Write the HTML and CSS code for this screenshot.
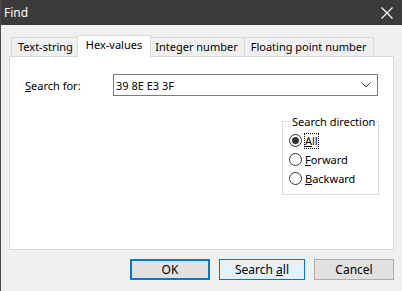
FILE: index.html
```html
<!DOCTYPE html>
<html lang="en">
<head>
    <meta charset="UTF-8">
    <title>Find</title>
    <link rel="stylesheet" href="styles.css">
</head>
<body>
    <div class="window">
        <div class="titlebar">
            <span class="title">Find</span>
            <svg class="close" width="12" height="12" viewBox="0 0 12 12">
                <path d="M0.5 0.5 L11.5 11.5 M11.5 0.5 L0.5 11.5" stroke="#fff" stroke-width="1.2" fill="none"/>
            </svg>
        </div>

        <div class="body">
            <div class="tabs">
                <div class="tab">Text-string</div>
                <div class="tab active">Hex-values</div>
                <div class="tab">Integer number</div>
                <div class="tab">Floating point number</div>
            </div>

            <div class="panel">
                <div class="search-row">
                    <label class="label"><u>S</u>earch for:</label>
                    <div class="combo">
                        <span>39 8E E3 3F</span>
                        <svg width="10" height="6" viewBox="0 0 10 6">
                            <path d="M0.5 0.5 L5 5 L9.5 0.5" stroke="#444" stroke-width="1" fill="none"/>
                        </svg>
                    </div>
                </div>

                <fieldset class="group">
                    <legend>Search direction</legend>
                    <div class="radio">
                        <span class="dot checked"></span>
                        <span class="focus"><u>A</u>ll</span>
                    </div>
                    <div class="radio">
                        <span class="dot"></span>
                        <span><u>F</u>orward</span>
                    </div>
                    <div class="radio">
                        <span class="dot"></span>
                        <span><u>B</u>ackward</span>
                    </div>
                </fieldset>
            </div>

            <div class="buttons">
                <button class="btn default">OK</button>
                <button class="btn hot">Search <u>a</u>ll</button>
                <button class="btn">Cancel</button>
            </div>
        </div>
    </div>
</body>
</html>
```

FILE: styles.css
```css
/* Reset */
* {
    margin: 0;
    padding: 0;
    box-sizing: border-box;
}

body {
    font-family: "Noto Sans", "Open Sans", sans-serif;
    font-size: 11px;
    color: #000;
    background: #f0f0f0;
}

.window {
    width: 402px;
    height: 291px;
    display: flex;
    flex-direction: column;
    border-left: 1px solid #4a4848;
    background: #f0f0f0;
}

/* Title bar */
.titlebar {
    height: 25px;
    background: #3d3a3c;
    display: flex;
    align-items: center;
    justify-content: space-between;
    padding: 0 9px 0 3px;
}

.title {
    color: #fff;
    font-size: 12px;
}

.close {
    display: block;
}

/* Dialog content */
.body {
    flex: 1;
    padding: 12px 8px 0 8px;
    display: flex;
    flex-direction: column;
}

.tabs {
    display: flex;
    padding-left: 2px;
    height: 19px;
    align-items: flex-end;
}

.tab {
    height: 19px;
    line-height: 18px;
    padding: 0 6px;
    border: 1px solid #d9d9d9;
    border-bottom: none;
    background: #f0f0f0;
    margin-left: -1px;
}

.tab:first-child {
    margin-left: 0;
}

.tab.active {
    position: relative;
    z-index: 1;
    height: 22px;
    line-height: 18px;
    margin: 0 -2px -1px -3px;
    padding: 0 8px;
    background: #fff;
}

.panel {
    height: 194px;
    background: #fff;
    border: 1px solid #d9d9d9;
    padding: 17px 14px 0 15px;
    display: flex;
    flex-direction: column;
}

.search-row {
    display: flex;
    align-items: center;
}

.label {
    width: 88px;
}

.combo {
    width: 265px;
    height: 22px;
    border: 1px solid #7a7a7a;
    display: flex;
    align-items: center;
    justify-content: space-between;
    padding: 0 6px 0 2px;
}

.group {
    align-self: flex-end;
    width: 97px;
    min-width: 0;
    margin-top: 18px;
    border: 1px solid #dcdcdc;
    padding: 2px 0 6px 6px;
}

.group legend {
    padding: 0 1px;
    margin-left: 2px;
    white-space: nowrap;
}

.radio {
    display: flex;
    align-items: center;
    height: 19px;
}

.dot {
    width: 13px;
    height: 13px;
    border: 1px solid #333;
    border-radius: 50%;
    margin-right: 3px;
    display: flex;
    align-items: center;
    justify-content: center;
}

.dot.checked::after {
    content: "";
    width: 7px;
    height: 7px;
    border-radius: 50%;
    background: #333;
}

.focus {
    outline: 1px dotted #000;
    line-height: 14px;
}

/* Buttons */
.buttons {
    display: flex;
    justify-content: flex-end;
    gap: 9px;
    padding-top: 9px;
}

.btn {
    font-family: inherit;
    font-size: 12px;
    width: 80px;
    height: 21px;
    background: #e1e1e1;
    border: 1px solid #adadad;
    color: #000;
}

.btn.default {
    border: 2px solid #0078d7;
}

.btn.hot {
    width: 86px;
    background: #e5f1fb;
    border-color: #0078d7;
}
```
